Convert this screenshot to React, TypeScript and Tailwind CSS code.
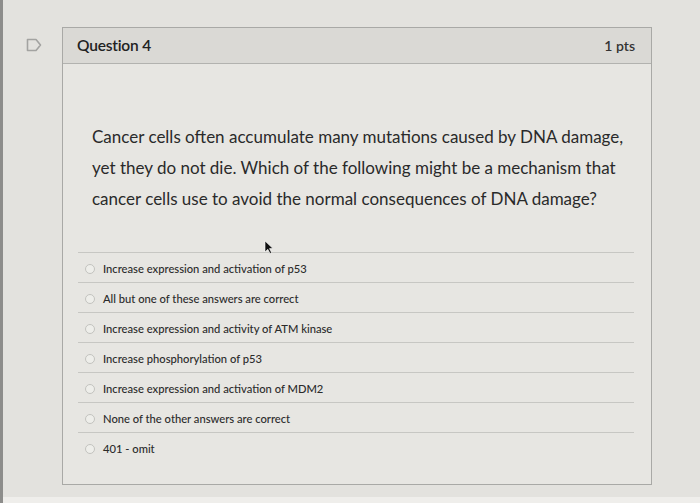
import React from "react";

const options = [
  "Increase expression and activation of p53",
  "All but one of these answers are correct",
  "Increase expression and activity of ATM kinase",
  "Increase phosphorylation of p53",
  "Increase expression and activation of MDM2",
  "None of the other answers are correct",
  "401 - omit",
];

export default function App() {
  return (
    <div className="relative flex h-[503px] w-[700px] overflow-hidden bg-[#e3e2de] font-['Lato',sans-serif]">
      <div className="w-[3px] shrink-0 bg-[#8d8d8b]" />
      <div className="flex flex-1 flex-col">
        <div className="flex flex-1 pt-[27px]">
          <div className="w-[59px] shrink-0 pl-[23px] pt-[11px]">
            <svg width="16" height="14" viewBox="0 0 16 14">
              <path d="M1.5 1.5 H10 L14.5 7 L10 12.5 H1.5 Z" fill="none" stroke="#a3a3a1" strokeWidth="1.6" strokeLinejoin="round" />
            </svg>
          </div>
          <div className="flex h-[458px] w-[590px] flex-col border-[1.5px] border-[#a9a9a6] bg-[#e7e6e2]">
            <div className="flex h-[36px] shrink-0 items-center justify-between border-b-[1.5px] border-[#b2b2af] bg-[#dad9d5] pl-[14px] pr-[16px]">
              <span className="mt-[1px] text-[15.5px] font-semibold tracking-[-0.2px] text-[#222]">Question 4</span>
              <span className="text-[14px] font-semibold text-[#333]">1 pts</span>
            </div>
            <p className="ml-[29px] mt-[57px] text-[17px] leading-[31px] text-[#2a2a2a]">
              Cancer cells often accumulate many mutations caused by DNA damage,
              <br />
              yet they do not die. Which of the following might be a mechanism that
              <br />
              cancer cells use to avoid the normal consequences of DNA damage?
            </p>
            <div className="relative h-[38px]">
              <svg className="absolute left-[201px] top-[26px]" width="10" height="14" viewBox="0 0 10 14">
                <path d="M1 1 L1 12 L3.8 9.3 L6 13.5 L7.6 12.7 L5.5 8.6 L9 8.6 Z" fill="#111" stroke="#fff" strokeWidth="0.6" />
              </svg>
            </div>
            <div className="ml-[15px] mr-[17px] flex flex-col">
              {options.map((o) => (
                <div key={o} className="flex h-[30px] items-center gap-[8px] border-t border-[#c7c7c3] pl-[7px] pt-[3px]">
                  <span className="h-[10px] w-[10px] shrink-0 rounded-full border border-[#c3c3bf] bg-[#eeeeea]" />
                  <span className="text-[11.2px] font-medium text-[#2b2b2b]">{o}</span>
                </div>
              ))}
            </div>
          </div>
        </div>
        <div className="h-[6px] bg-[#efeeeb]" />
      </div>
    </div>
  );
}
